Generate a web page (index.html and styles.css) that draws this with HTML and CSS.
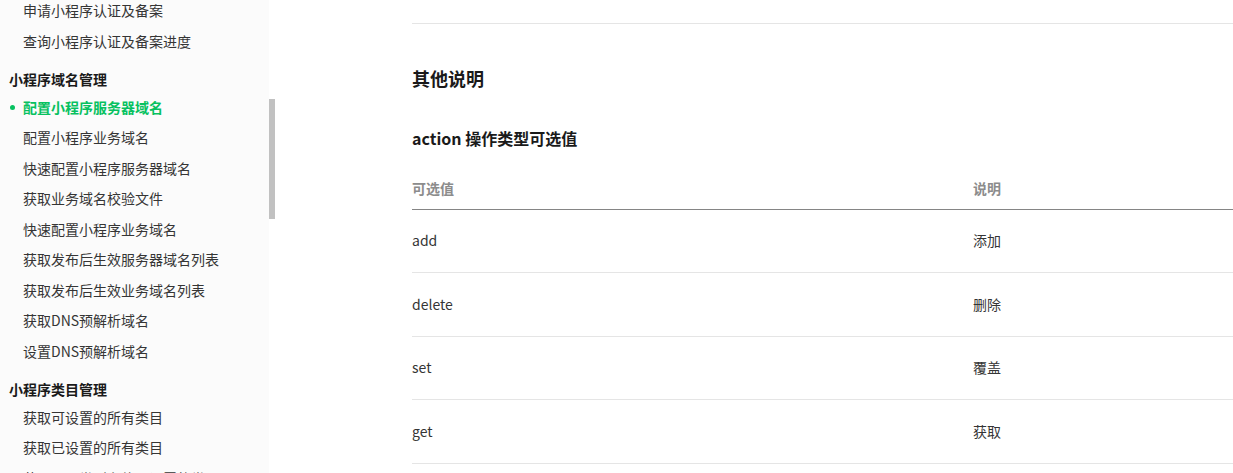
FILE: index.html
```html
<!DOCTYPE html>
<html lang="zh-CN">
<head>
<meta charset="utf-8">
<title>配置小程序服务器域名</title>
<link rel="stylesheet" href="styles.css">
</head>
<body>
<div class="page">
  <aside class="sidebar">
    <ul class="nav">
      <li class="item">申请小程序认证及备案</li>
      <li class="item">查询小程序认证及备案进度</li>
      <li class="group">小程序域名管理</li>
      <li class="item active">配置小程序服务器域名</li>
      <li class="item">配置小程序业务域名</li>
      <li class="item">快速配置小程序服务器域名</li>
      <li class="item">获取业务域名校验文件</li>
      <li class="item">快速配置小程序业务域名</li>
      <li class="item">获取发布后生效服务器域名列表</li>
      <li class="item">获取发布后生效业务域名列表</li>
      <li class="item">获取DNS预解析域名</li>
      <li class="item">设置DNS预解析域名</li>
      <li class="group">小程序类目管理</li>
      <li class="item">获取可设置的所有类目</li>
      <li class="item">获取已设置的所有类目</li>
      <li class="item">获取不同类型主体可设置的类目</li>
    </ul>
    <div class="scroll-thumb"></div>
  </aside>
  <main class="content">
    <div class="prev-row"><span class="prev-text">[ ]</span></div>
    <h2 class="h2">其他说明</h2>
    <h3 class="h3">action 操作类型可选值</h3>
    <table class="table">
      <thead>
        <tr><th class="c1">可选值</th><th class="c2">说明</th></tr>
      </thead>
      <tbody>
        <tr><td>add</td><td>添加</td></tr>
        <tr><td>delete</td><td>删除</td></tr>
        <tr><td>set</td><td>覆盖</td></tr>
        <tr><td>get</td><td>获取</td></tr>
      </tbody>
    </table>
  </main>
</div>
</body>
</html>
```
FILE: styles.css
```css
html, body {
  margin: 0;
  padding: 0;
  background: #ffffff;
  overflow: hidden;
}
body {
  font-family: "Noto Sans CJK SC", "Noto Sans", sans-serif;
  font-size: 14px;
  color: #353535;
}
.page {
  display: flex;
  height: 473px;
  overflow: hidden;
}
.sidebar {
  position: relative;
  flex: 0 0 275px;
  width: 275px;
  height: 473px;
  overflow: hidden;
  background: linear-gradient(to right, #fbfbfb 0, #fbfbfb 269px, #ffffff 269px);
}
.nav {
  list-style: none;
  margin: -5px 0 0 0;
  padding: 0;
  width: 269px;
}
.item {
  position: relative;
  height: 30.5px;
  line-height: 30.5px;
  padding-left: 23px;
  white-space: nowrap;
  color: #353535;
}
.item.active {
  color: #07c160;
  font-weight: bold;
}
.item.active::before {
  content: "";
  position: absolute;
  left: 10px;
  top: 13px;
  width: 5px;
  height: 5px;
  border-radius: 50%;
  background: #07c160;
}
.group {
  margin-top: 12px;
  height: 23.5px;
  line-height: 23.5px;
  padding-left: 9px;
  font-weight: bold;
  color: #1a1a1a;
}
.scroll-thumb {
  position: absolute;
  left: 269px;
  top: 99px;
  width: 6px;
  height: 120px;
  background: #c1c1c1;
}
.content {
  flex: 0 0 auto;
  width: 840px;
  padding-left: 137px;
}
.prev-row {
  height: 23px;
  border-bottom: 1px solid #e5e5e5;
  position: relative;
  overflow: hidden;
}
.prev-text {
  display: block;
  margin-top: -19px;
  padding-left: 16px;
  line-height: 20px;
  font-size: 14px;
  color: #353535;
  letter-spacing: 18px;
}
.h2 {
  margin: 41px 0 0 0;
  font-size: 18px;
  line-height: 26px;
  font-weight: bold;
  color: #1a1a1a;
}
.h3 {
  margin: 35px 0 0 0;
  font-size: 16px;
  line-height: 24px;
  font-weight: bold;
  color: #1a1a1a;
}
.table {
  margin-top: 17px;
  width: 840px;
  border-collapse: collapse;
  border-spacing: 0;
  table-layout: fixed;
}
.c1 {
  width: 561px;
}
.table th {
  text-align: left;
  font-size: 14px;
  font-weight: bold;
  color: #8c8c8c;
  line-height: 22px;
  padding: 10px 0 9.5px 0;
  border-bottom: 1px solid #858585;
}
.table td {
  font-size: 14px;
  line-height: 22px;
  padding: 19.5px 0 21px 0;
  color: #353535;
  border-bottom: 1px solid #e5e5e5;
}
```
